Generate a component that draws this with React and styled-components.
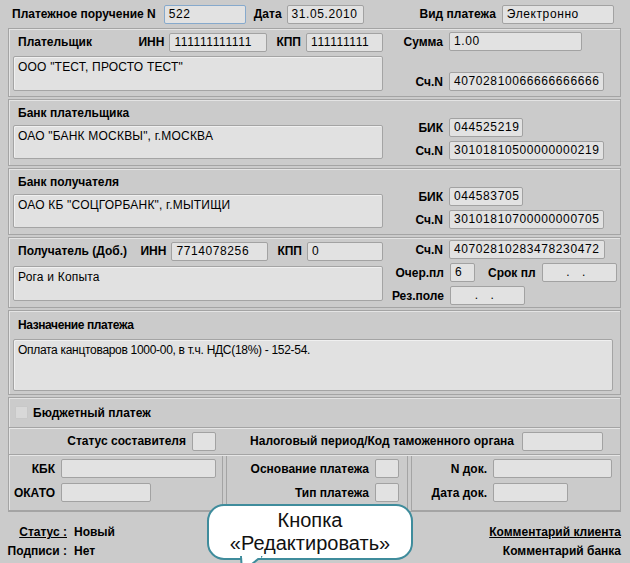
import React from 'react'
import styled, { createGlobalStyle } from 'styled-components'

const GlobalStyle = createGlobalStyle`
  html, body {
    margin: 0;
    padding: 0;
    background: #cbcbcb;
  }
  body {
    font-family: "Liberation Sans", Arial, sans-serif;
  }
`

const Page = styled.div`
  position: relative;
  width: 630px;
  height: 563px;
  overflow: hidden;
  background: #cbcbcb;
  color: #000;
  font-size: 12px;
`

const TopRow = styled.div`
  display: flex;
  align-items: center;
  height: 28px;
  padding-left: 12px;
  box-sizing: border-box;
`

const Label = styled.span`
  display: inline-block;
  font-weight: bold;
  font-size: 12px;
  white-space: nowrap;
  text-align: ${p => (p.$left ? 'left' : 'right')};
  width: ${p => (p.$w ? p.$w + 'px' : 'auto')};
  margin-left: ${p => p.$ml || 0}px;
  margin-right: ${p => (p.$mr === undefined ? 5 : p.$mr)}px;
  flex-shrink: 0;
`

const Field = styled.div`
  box-sizing: border-box;
  flex-shrink: 0;
  height: 19px;
  width: ${p => p.$w}px;
  border: 1px solid ${p => (p.$focus ? '#86a9cc' : '#a2a2a2')};
  border-radius: 2px;
  background: #e2e2e2;
  padding: 0 4px;
  line-height: 17px;
  font-size: 12px;
  letter-spacing: 0.6px;
  white-space: nowrap;
  overflow: hidden;
  margin-right: ${p => p.$mr || 0}px;
`

const Frame = styled.div`
  margin-left: 8px;
  width: 613px;
  display: flex;
  flex-direction: column;
  gap: 2px;
`

const Section = styled.div`
  box-sizing: border-box;
  height: ${p => p.$h}px;
  border: 1px solid #a4a4a4;
  box-shadow: inset 1px 1px 0 #e4e4e4;
  padding: 4px 7px 0 4px;
  display: grid;
  grid-template-columns: 370px 1fr;
  column-gap: 7px;
`

const Wide = styled(Section)`
  display: flex;
  flex-direction: column;
  gap: 5px;
`

const Left = styled.div`
  display: flex;
  flex-direction: column;
  gap: ${p => p.$gap || 5}px;
`

const Right = styled.div`
  display: flex;
  flex-direction: column;
  justify-content: ${p => p.$justify || 'flex-end'};
  gap: 4px;
  margin-top: ${p => p.$mt || 0}px;
  padding-bottom: ${p => p.$pb || 0}px;
`

const Row = styled.div`
  display: flex;
  align-items: center;
  height: ${p => p.$h || 19}px;
`

const Title = styled.span`
  font-weight: bold;
  font-size: 12px;
  letter-spacing: ${p => (p.$narrow ? -0.4 : 0)}px;
  margin-left: 5px;
  margin-right: auto;
  white-space: nowrap;
`

const TextBox = styled.div`
  box-sizing: border-box;
  height: ${p => p.$h}px;
  border: 1px solid #a4a4a4;
  border-radius: 2px;
  background: #e1e1e1;
  box-shadow: inset 1px 1px 0 #f0f0f0;
  padding: 3px 4px;
  font-size: 12px;
  letter-spacing: ${p => (p.$narrow ? -0.3 : 0.2)}px;
  line-height: 15px;
`

const Budget = styled.div`
  box-sizing: border-box;
  margin: 2px 0 0 8px;
  width: 613px;
  border: 1px solid #a4a4a4;
  box-shadow: inset 1px 1px 0 #e4e4e4;
`

const CheckRow = styled.div`
  display: flex;
  align-items: center;
  height: 29px;
  padding-left: 6px;
  border-bottom: 1px solid #a4a4a4;
  box-shadow: 0 1px 0 #e6e6e6;
`

const CheckBox = styled.span`
  width: 11px;
  height: 11px;
  margin-right: 5px;
  background: #d8d8d8;
  border: 1px solid #c8c8c8;
  border-radius: 1px;
`

const StatusRow = styled.div`
  display: flex;
  align-items: center;
  height: 26px;
  border-bottom: 1px solid #a4a4a4;
  box-shadow: 0 1px 0 #e6e6e6;
`

const Columns = styled.div`
  display: grid;
  grid-template-columns: 214px 182px 1fr;
  column-gap: 3px;
  padding-top: 1px;
`

const Column = styled.div`
  box-sizing: border-box;
  height: 55px;
  border: 1px solid #a4a4a4;
  border-top: none;
  border-left: ${p => (p.$first ? 'none' : '1px solid #a4a4a4')};
  border-right: ${p => (p.$last ? 'none' : '1px solid #a4a4a4')};
  padding-top: 3px;
  display: flex;
  flex-direction: column;
  gap: 5px;
`

const Footer = styled.div`
  display: flex;
  justify-content: space-between;
  padding: 14px 9px 0 5px;
`

const StatusGrid = styled.div`
  display: grid;
  grid-template-columns: 62px auto;
  column-gap: 7px;
  row-gap: 6px;
  font-weight: bold;
  font-size: 12px;
  line-height: 13px;
`

const Key = styled.span`
  text-align: right;
  text-decoration: ${p => (p.$link ? 'underline' : 'none')};
`

const Links = styled.div`
  display: flex;
  flex-direction: column;
  align-items: flex-end;
  gap: 6px;
  font-weight: bold;
  font-size: 12px;
  line-height: 13px;
`

const Link = styled.span`
  text-decoration: ${p => (p.$u ? 'underline' : 'none')};
`

const Callout = styled.div`
  position: absolute;
  left: 207px;
  top: 504px;
  width: 206px;
  height: 56px;
  box-sizing: border-box;
  border: 2px solid #3f8c9c;
  border-radius: 17px;
  background: #fff;
  text-align: center;
  font-family: "Liberation Sans", Arial, sans-serif;
  font-size: 20px;
  line-height: 23px;
  color: #111;
  padding-top: 3px;
`

const Tail = styled.svg`
  position: absolute;
  left: 31px;
  bottom: -14px;
`

const Inn = ({ title, inn, kpp, innW, kppW }) => (
  <Row $h={18}>
    <Title>{title}</Title>
    <Label>ИНН</Label>
    <Field $w={innW} $mr={9}>{inn}</Field>
    <Label>КПП</Label>
    <Field $w={kppW}>{kpp}</Field>
  </Row>
)

const RField = ({ label, w, children }) => (
  <Row>
    <Label $w={53} $mr={6}>{label}</Label>
    <Field $w={w}>{children}</Field>
  </Row>
)

const BankSection = ({ title, name, bik, acc }) => (
  <Section $h={67}>
    <Left $gap={4}>
      <Row $h={17}>
        <Title>{title}</Title>
      </Row>
      <TextBox $h={34}>{name}</TextBox>
    </Left>
    <Right $pb={5}>
      <RField label="БИК" w={74}>{bik}</RField>
      <RField label="Сч.N" w={155}>{acc}</RField>
    </Right>
  </Section>
)

const App = () => {
  return (
    <Page>
      <GlobalStyle />
      <TopRow>
        <Label $mr={8}>Платежное поручение N</Label>
        <Field $w={82} $focus $mr={8}>522</Field>
        <Label>Дата</Label>
        <Field $w={77} $mr={56}>31.05.2010</Field>
        <Label $mr={6}>Вид платежа</Label>
        <Field $w={112}>Электронно</Field>
      </TopRow>

      <Frame>
        <Section $h={69}>
          <Left>
            <Inn title="Плательщик" inn="111111111111" kpp="111111111" innW={98} kppW={77} />
            <TextBox $h={35}>ООО "ТЕСТ, ПРОСТО ТЕСТ"</TextBox>
          </Left>
          <Right $justify="space-between" $mt={-1} $pb={5}>
            <RField label="Сумма" w={133}>1.00</RField>
            <RField label="Сч.N" w={155}>40702810066666666666</RField>
          </Right>
        </Section>

        <BankSection
          title="Банк плательщика"
          name={'ОАО "БАНК МОСКВЫ", г.МОСКВА'}
          bik="044525219"
          acc="30101810500000000219"
        />
        <BankSection
          title="Банк получателя"
          name={'ОАО КБ "СОЦГОРБАНК", г.МЫТИЩИ'}
          bik="044583705"
          acc="30101810700000000705"
        />

        <Section $h={71}>
          <Left $gap={6}>
            <Inn title="Получатель (Доб.)" inn="7714078256" kpp="0" innW={97} kppW={76} />
            <TextBox $h={35}>Рога и Копыта</TextBox>
          </Left>
          <Right $justify="flex-start" $mt={-2}>
            <RField label="Сч.N" w={156}>40702810283478230472</RField>
            <Row>
              <Label $w={54} $mr={6}>Очер.пл</Label>
              <Field $w={25} $mr={13}>6</Field>
              <Label $mr={6}>Срок пл</Label>
              <Field $w={75}>&nbsp;&nbsp;&nbsp;&nbsp;&nbsp;.&nbsp;&nbsp;&nbsp;.</Field>
            </Row>
            <Row>
              <Label $w={54} $mr={6}>Рез.поле</Label>
              <Field $w={75}>&nbsp;&nbsp;&nbsp;&nbsp;&nbsp;.&nbsp;&nbsp;&nbsp;.</Field>
            </Row>
          </Right>
        </Section>

        <Wide $h={85}>
          <Row $h={19}>
            <Title $narrow>Назначение платежа</Title>
          </Row>
          <TextBox $h={52} $narrow>Оплата канцтоваров 1000-00, в т.ч. НДС(18%) - 152-54.</TextBox>
        </Wide>
      </Frame>

      <Budget>
        <CheckRow>
          <CheckBox />
          <Label $left>Бюджетный платеж</Label>
        </CheckRow>
        <StatusRow>
          <Label $w={177} $mr={6}>Статус составителя</Label>
          <Field $w={24}>&nbsp;</Field>
          <Label $w={298} $mr={8}>Налоговый период/Код таможенного органа</Label>
          <Field $w={81}>&nbsp;</Field>
        </StatusRow>
        <Columns>
          <Column $first>
            <Row>
              <Label $w={46} $mr={6}>КБК</Label>
              <Field $w={155}>&nbsp;</Field>
            </Row>
            <Row>
              <Label $w={46} $mr={6}>ОКАТО</Label>
              <Field $w={90}>&nbsp;</Field>
            </Row>
          </Column>
          <Column>
            <Row>
              <Label $w={142} $mr={6}>Основание платежа</Label>
              <Field $w={24}>&nbsp;</Field>
            </Row>
            <Row>
              <Label $w={142} $mr={6}>Тип платежа</Label>
              <Field $w={24}>&nbsp;</Field>
            </Row>
          </Column>
          <Column $last>
            <Row>
              <Label $w={75} $mr={6}>N док.</Label>
              <Field $w={119}>&nbsp;</Field>
            </Row>
            <Row>
              <Label $w={75} $mr={6}>Дата док.</Label>
              <Field $w={75}>&nbsp;</Field>
            </Row>
          </Column>
        </Columns>
      </Budget>

      <Footer>
        <StatusGrid>
          <Key $link>Статус :</Key>
          <span>Новый</span>
          <Key>Подписи :</Key>
          <span>Нет</span>
        </StatusGrid>
        <Links>
          <Link $u>Комментарий клиента</Link>
          <Link>Комментарий банка</Link>
        </Links>
      </Footer>

      <Callout>
        Кнопка
        <br />
        «Редактировать»
        <Tail width="26" height="16" viewBox="0 0 26 16">
          <path d="M1 0 L2 16 L22 0" fill="#fff" stroke="#3f8c9c" strokeWidth="2" />
          <rect x="2" y="0" width="19" height="2" fill="#fff" />
        </Tail>
      </Callout>
    </Page>
  )
}

export default App
